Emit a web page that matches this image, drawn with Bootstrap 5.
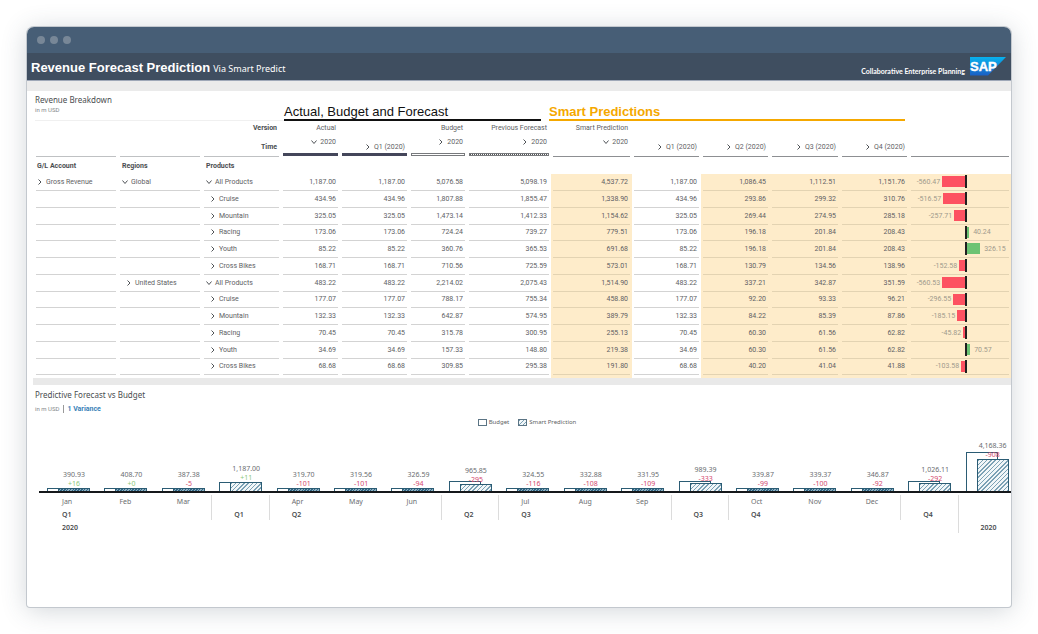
<!DOCTYPE html>
<html lang="en">
<head>
<meta charset="utf-8">
<meta name="viewport" content="width=device-width, initial-scale=1">
<title>Revenue Forecast Prediction</title>
<link href="https://cdn.jsdelivr.net/npm/bootstrap@5.3.0/dist/css/bootstrap.min.css" rel="stylesheet">
<style>
  :root { --ink:#4a4d50; --soft:#6a6d70; --teal:#2b5c74; --gold:#f5a800; --sand:#feecca; --red:#fd5161; --green:#6cc373; }
  body { font-family:Roboto,"Noto Sans",sans-serif; font-size:7px; line-height:12px; color:#5e6164; padding:27px; background:#fff; }
  .app-window { min-height:calc(100vh - 54px); border-radius:7px 7px 3px 3px; background:#fff; box-shadow:0 0 0 1px #c3c8ce, 0 3px 26px rgba(60,75,90,.24); }
  .title-bar { height:26px; padding:0 10px; gap:5px; background:#475e76; }
  .dot { width:8px; height:8px; border-radius:50%; background:#788797; }
  .app-header { height:28px; padding:0 5px 0 4px; background:#3f4e60; color:#fff; border-bottom:1px solid #9fa8b8; }
  .app-header h1 { font:bold 13px/18px "Liberation Sans",sans-serif; }
  .app-header .via { font:9px/18px "Noto Sans",sans-serif; }
  .app-header .titles { gap:3px; padding-top:4px; }
  .tagline { font:bold 7px/9px Lato,sans-serif; }
  .band { height:10px; background:#ebebeb; }
  .band-thin { height:7px; margin-left:6px; background:#e9e9e9; }
  .panel-title { font-family:"Noto Sans",sans-serif; font-size:8px; line-height:12px; font-weight:400; color:var(--ink); }
  .unit { font-size:6px; line-height:8px; color:#85888b; }
  .heads { height:30px; margin-left:8px; }
  .head-left { flex:249 1 0; padding-top:3px; border-bottom:1px solid #f0f0f0; }
  .head-actual { flex:257 1 0; border-bottom:2px solid #111; color:#111; }
  .head-smart { flex:356 1 0; border-bottom:2px solid var(--gold); color:var(--gold); margin-left:8px; }
  .head-rest { flex:106 1 0; }
  .heads h2 { font:13px/15px "Liberation Sans",sans-serif; }
  .heads .head-smart h2 { font-weight:bold; }

  .grid-table { table-layout:fixed; width:calc(100% - 7px); margin-left:7px; border-collapse:separate; border-spacing:0; }
  .grid-table th, .grid-table td { padding:0 4px; white-space:nowrap; }
  .grid-table th { font-weight:400; }
  .grid-table .dim { font-weight:700; color:var(--ink); }
  .grid-table .cell-start { padding-left:3px; }
  .row-version { height:14px; }
  .row-time { height:22px; vertical-align:bottom; }
  .row-time th { padding:0 2px; }
  .row-time span { display:block; padding-right:2px; }
  .row-time .year { margin-bottom:5px; }
  .bar-solid, .bar-open, .bar-hatch { height:3px; margin:0 0 1px; }
  .bar-solid { background:#44465a; }
  .bar-open { border:1px solid #77797c; background:#fff; }
  .bar-hatch { border:1px solid #77797c; background:repeating-linear-gradient(90deg,#55575a 0 1px,#fff 1px 2px); }
  .bar-line { height:4px; border-bottom:1px solid #8d8f92; }
  .bar-faint { border-color:#bfc1c3; }
  .row-dims { height:17px; }
  tbody tr { height:17px; }
  tbody tr:nth-child(4n) { height:16px; }
  .grid-table tbody td { padding-bottom:2px; background:linear-gradient(#d3d3d3,#d3d3d3) center bottom / calc(100% - 4px) 1px no-repeat; }
  .grid-table .sand { background-color:var(--sand); }
  .grid-table tbody .sand { background-image:linear-gradient(#e3d3b2,#e3d3b2); }
  .row-tail { height:3px; line-height:0; }
  .chev { width:6px; height:6px; fill:none; stroke:#4f5357; stroke-width:1; vertical-align:middle; margin-right:3px; }
  .indent { padding-left:4px; }
  .var-left { flex:0 0 55%; gap:2px; }
  .var-bar { height:11px; }
  .var-axis { width:2px; height:13px; background:#202020; }
  .var-text { color:#a09a8c; }
  .neg { background:var(--red); }
  .pos { background:var(--green); }
  .grid-table td.var-cell { padding-left:0; padding-right:0; }

  .chart-head { padding:4px 8px 0; }
  .sub-line { padding-top:4px; }
  .variance-link { font-weight:700; color:#3a82b8; border-left:1px solid #999; padding-left:3px; margin-left:4px; line-height:8px; }
  .legend { gap:9px; padding:4px 0 2px 16px; font:6px/10px "Noto Sans",sans-serif; }
  .swatch { width:9px; height:7px; border:1px solid #5b7484; margin-right:2px; }
  .hatched { background:repeating-linear-gradient(135deg,#7ba1b5 0 1px,#f1f6f8 1px 3px); }
  .dense { background:repeating-linear-gradient(135deg,#2f6583 0 1px,#8fb0c2 1px 2px); }
  .chart-clip { padding-left:12px; overflow:hidden; }
  .chart { display:grid; grid-template-columns:repeat(17,minmax(0,1fr)); margin-right:-4px; }
  .plot { height:64px; display:grid; align-items:end; border-bottom:2px solid #15181b; }
  .plot > * { grid-area:1/1; width:32px; }
  .budget { margin-left:8px; border:1px solid var(--teal); border-bottom:0; background:#fff; }
  .forecast { margin-left:19px; }
  .forecast .fbar { border:1px solid var(--teal); border-bottom:0; }
  .flabel { font-family:"Noto Sans",sans-serif; line-height:9px; white-space:nowrap; color:var(--soft); }
  .up { color:#8cc97a; }
  .down { color:#d4486e; }
  .axis-label { margin-top:2px; padding-left:23px; font-family:"Noto Sans",sans-serif; line-height:13px; min-height:39px; color:var(--soft); }
  .axis-label b { color:var(--ink); font-weight:600; }
  .axis-label div { height:13px; }
  .sep { background:linear-gradient(#dcdcdc,#dcdcdc) left top / 1px 25px no-repeat; }
  .sep-tall { background-size:1px 38px; }
</style>
</head>
<body>
<main class="app-window overflow-hidden">
  <div class="title-bar d-flex align-items-center"><i class="dot"></i><i class="dot"></i><i class="dot"></i></div>
  <header class="app-header d-flex align-items-center justify-content-between">
    <div class="titles d-flex align-items-baseline"><h1 class="m-0">Revenue Forecast Prediction</h1><span class="via">Via Smart Predict</span></div>
    <div class="d-flex align-items-end gap-1">
      <span class="tagline">Collaborative Enterprise Planning</span>
      <svg width="37" height="19" viewBox="0 0 37 19" role="img" aria-label="SAP">
        <defs><linearGradient id="sap" x1="0" y1="0" x2="0" y2="1"><stop offset="0" stop-color="#08b2ee"/><stop offset="1" stop-color="#1a5fc4"/></linearGradient></defs>
        <path d="M1 0h36L19 18.500H1z" fill="url(#sap)"/>
        <text x="1" y="14" font-family="Liberation Sans" font-weight="bold" font-size="13" fill="#fff" stroke="#fff" stroke-width=".4">SAP</text>
      </svg>
    </div>
  </header>
  <div class="band"></div>

  <section>
    <div class="heads d-flex">
      <div class="head-left"><div class="panel-title">Revenue Breakdown</div><div class="unit">in m USD</div></div>
      <div class="head-actual d-flex align-items-end"><h2 class="m-0">Actual, Budget and Forecast</h2></div>
      <div class="head-smart d-flex align-items-end"><h2 class="m-0">Smart Predictions</h2></div>
      <div class="head-rest"></div>
    </div>
    <table class="grid-table">
      <colgroup>
        <col style="width:84px"><col style="width:84px"><col style="width:79px"><col style="width:59px"><col style="width:69px"><col style="width:58px"><col style="width:84px"><col style="width:81px"><col style="width:69px"><col style="width:69px"><col style="width:70px"><col style="width:69px"><col style="width:102px">
      </colgroup>
      <thead>
        <tr class="row-version text-end">
          <th colspan="3" class="dim">Version</th><th>Actual</th><th></th><th>Budget</th><th>Previous Forecast</th><th>Smart Prediction</th><th colspan="5"></th>
        </tr>
        <tr class="row-time text-end" id="timeRow"></tr>
        <tr class="row-dims">
          <th class="dim cell-start">G/L Account</th><th class="dim">Regions</th><th class="dim">Products</th><th colspan="10"></th>
        </tr>
      </thead>
      <tbody id="rows"></tbody>
      <tfoot>
        <tr class="row-tail"><td colspan="7"></td><td class="sand"></td><td></td><td class="sand" colspan="4"></td></tr>
      </tfoot>
    </table>
  </section>
  <div class="band-thin"></div>

  <section>
    <div class="chart-head">
      <div class="panel-title">Predictive Forecast vs Budget</div>
      <div class="sub-line d-flex align-items-center"><span class="unit">in m USD</span><a href="#" class="variance-link text-decoration-none">1 Variance</a></div>
      <div class="legend d-flex justify-content-center">
        <span class="d-flex align-items-center"><i class="swatch"></i>Budget</span>
        <span class="d-flex align-items-center"><i class="swatch hatched"></i>Smart Prediction</span>
      </div>
    </div>
    <div class="chart-clip"><div class="chart" id="chart"></div></div>
  </section>
</main>

<script>
  const chev = open => `<svg class="chev" viewBox="0 0 6 6" aria-hidden="true"><path d="${open ? 'M.5 1.500 3 4.500 5.500 1.500' : 'M1.500 .5 4 3 1.500 5.500'}"/></svg>`;

  // Time header: [label, expanded, bar style]
  const times = [['', 0, 'line bar-faint'], ['', 0, 'line bar-faint'], ['Time', null, 'line bar-faint'],
    ['2020', true, 'solid'], ['Q1 (2020)', false, 'solid'], ['2020', false, 'open'], ['2020', false, 'hatch'], ['2020', true, 'line'],
    ['Q1 (2020)', false, 'line'], ['Q2 (2020)', false, 'line'], ['Q3 (2020)', false, 'line'], ['Q4 (2020)', false, 'line'], ['', 0, 'line']];
  document.getElementById('timeRow').innerHTML = times.map(([t, open, bar]) =>
    `<th>${t ? `<span class="${t === '2020' ? 'year' : t === 'Time' ? 'dim' : ''}">${open === null ? '' : chev(open)}${t}</span>` : ''}<div class="bar-${bar}"></div></th>`).join('');

  const rows = [
    ['Gross Revenue', 'Global', 'All Products', '1,187.00 1,187.00 5,076.58 5,098.19 4,537.72 1,187.00 1,086.45 1,112.51 1,151.76', -560.47],
    ['', '', 'Cruise', '434.96 434.96 1,807.88 1,855.47 1,338.90 434.96 293.86 299.32 310.76', -516.57],
    ['', '', 'Mountain', '325.05 325.05 1,473.14 1,412.33 1,154.62 325.05 269.44 274.95 285.18', -257.71],
    ['', '', 'Racing', '173.06 173.06 724.24 739.27 779.51 173.06 196.18 201.84 208.43', 40.24],
    ['', '', 'Youth', '85.22 85.22 360.76 365.53 691.68 85.22 196.18 201.84 208.43', 326.15],
    ['', '', 'Cross Bikes', '168.71 168.71 710.56 725.59 573.01 168.71 130.79 134.56 138.96', -152.58],
    ['', 'United States', 'All Products', '483.22 483.22 2,214.02 2,075.43 1,514.90 483.22 337.21 342.87 351.59', -560.53],
    ['', '', 'Cruise', '177.07 177.07 788.17 755.34 458.80 177.07 92.20 93.33 96.21', -296.55],
    ['', '', 'Mountain', '132.33 132.33 642.87 574.95 389.79 132.33 84.22 85.39 87.86', -185.15],
    ['', '', 'Racing', '70.45 70.45 315.78 300.95 255.13 70.45 60.30 61.56 62.82', -45.82],
    ['', '', 'Youth', '34.69 34.69 157.33 148.80 219.38 34.69 60.30 61.56 62.82', 70.57],
    ['', '', 'Cross Bikes', '68.68 68.68 309.85 295.38 191.80 68.68 40.20 41.04 41.88', -103.58]
  ];
  const sand = [4, 6, 7, 8];
  document.getElementById('rows').innerHTML = rows.map(([acc, reg, prod, nums, v]) => {
    const all = prod === 'All Products', width = Math.abs(v) / (v < 0 ? 24 : 26);
    const label = `<span class="var-text">${v.toFixed(2)}</span>`;
    const fill = `<i class="var-bar ${v < 0 ? 'neg' : 'pos'}" style="width:${Math.max(2, Math.round(width))}px"></i>`;
    return `<tr><td class="cell-start">${acc ? chev(false) + acc : ''}</td>
      <td>${reg ? `<span class="${reg === 'Global' ? '' : 'indent'}">${chev(reg === 'Global')}${reg}</span>` : ''}</td>
      <td><span class="${all ? '' : 'indent'}">${chev(all)}${prod}</span></td>
      ${nums.split(' ').map((n, i) => `<td class="text-end${sand.includes(i) ? ' sand' : ''}">${n}</td>`).join('')}
      <td class="sand var-cell"><div class="d-flex align-items-center"><div class="var-left d-flex align-items-center justify-content-end">${v < 0 ? label + fill : ''}</div><i class="var-axis"></i>${v > 0 ? `<div class="d-flex align-items-center gap-1">${fill}${label}</div>` : ''}</div></td></tr>`;
  }).join('');

  // Chart: [value, variance, budget height, forecast height, axis lines, separator]
  const bars = [
    ['390.93', '+16', 3, 3, ['Jan', 'Q1', '2020']], ['408.70', '+0', 3, 3, ['Feb']], ['387.38', '-5', 3, 3, ['Mar']],
    ['1,187.00', '+11', 9, 9, ['', 'Q1'], 'sep'],
    ['319.70', '-101', 3, 3, ['Apr', 'Q2'], 'sep'], ['319.56', '-101', 3, 3, ['May']], ['326.59', '-94', 3, 3, ['Jun']],
    ['965.85', '-295', 10, 7, ['', 'Q2'], 'sep'],
    ['324.55', '-116', 3, 3, ['Jul', 'Q3'], 'sep'], ['332.88', '-108', 3, 3, ['Aug']], ['331.95', '-109', 3, 3, ['Sep']],
    ['989.39', '-333', 10, 8, ['', 'Q3'], 'sep'],
    ['339.87', '-99', 3, 3, ['Oct', 'Q4'], 'sep'], ['339.37', '-100', 3, 3, ['Nov']], ['346.87', '-92', 3, 3, ['Dec']],
    ['1,026.11', '-292', 10, 8, ['', 'Q4'], 'sep'],
    ['4,168.36', '-908', 39, 32, ['', '', '2020'], 'sep sep-tall']
  ];
  document.getElementById('chart').innerHTML = bars.map(([val, dv, b, f, ax, sep = '']) =>
    `<div><div class="plot"><div class="budget" style="height:${b}px"></div>
      <div class="forecast d-flex flex-column"><span class="flabel align-self-center">${val}</span><span class="flabel align-self-center ${dv[0] === '+' ? 'up' : 'down'}">${dv}</span><div class="fbar ${f > 3 ? 'hatched' : 'dense'}" style="height:${f}px"></div></div></div>
      <div class="axis-label ${sep}">${ax.map((t, i) => `<div>${i ? `<b>${t}</b>` : t}</div>`).join('')}</div></div>`).join('');
</script>
<script src="https://cdn.jsdelivr.net/npm/bootstrap@5.3.0/dist/js/bootstrap.bundle.min.js"></script>
</body>
</html>
